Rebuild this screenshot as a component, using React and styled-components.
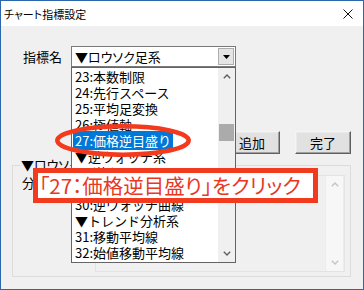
import React from 'react'
import styled, { createGlobalStyle } from 'styled-components'

const GlobalStyle = createGlobalStyle`
  html, body {
    margin: 0;
    padding: 0;
    background: #fff;
  }
  body {
    font-family: "Noto Sans CJK JP", "Noto Sans", sans-serif;
    font-size: 13px;
    color: #000;
  }
`

const Window = styled.div`
  position: relative;
  width: 364px;
  height: 290px;
  box-sizing: border-box;
  border: 1px solid #2c66ad;
  display: flex;
  flex-direction: column;
  overflow: hidden;
`

const TitleBar = styled.div`
  flex: none;
  height: 25px;
  background: #fff;
  display: flex;
  align-items: center;
  justify-content: space-between;
  padding: 0 10px 0 3px;
`

const Title = styled.span`
  font-size: 11px;
  line-height: 14px;
  font-feature-settings: "palt";
`

const Body = styled.div`
  flex: 1;
  background: #f0f0f0;
  padding: 20px 11px 0 11px;
  display: flex;
  flex-direction: column;
`

const ComboRow = styled.div`
  display: flex;
  align-items: center;
  padding-left: 11px;
`

const Label = styled.span`
  width: 48px;
  line-height: 16px;
`

const ComboWrap = styled.div`
  position: relative;
`

const Combo = styled.div`
  width: 165px;
  height: 21px;
  box-sizing: border-box;
  border: 1px solid #7a7a7a;
  background: #fff;
  display: flex;
  align-items: center;
  padding-left: 3px;
  font-feature-settings: "palt";
`

const DropButton = styled.div`
  margin-left: auto;
  margin-right: 1px;
  width: 16px;
  height: 17px;
  box-sizing: border-box;
  border: 1px solid #adadad;
  background: #e5e5e5;
  display: flex;
  align-items: center;
  justify-content: center;
`

const DropList = styled.div`
  position: absolute;
  top: 100%;
  left: 0;
  width: 165px;
  height: 196px;
  box-sizing: border-box;
  border: 1px solid #646464;
  background: #fff;
  display: flex;
  z-index: 2;
`

const Items = styled.div`
  flex: 1;
  overflow: hidden;
  padding-top: 1px;
`

const Item = styled.div`
  height: 16px;
  line-height: 16px;
  padding-left: 1px;
  white-space: nowrap;
`

const ItemText = styled.span`
  padding: 0 2px;
  background: ${p => (p.selected ? '#0078d7' : 'transparent')};
  color: ${p => (p.selected ? '#fff' : '#000')};
`

const ScrollBar = styled.div`
  width: 17px;
  flex: none;
  background: ${p => (p.disabled ? '#f7f7f7' : '#f0f0f0')};
  display: flex;
  flex-direction: column;
  ${p => p.disabled && 'border-left: 1px solid #ececec; border-right: 1px solid #ececec;'}
`

const Arrow = styled.div`
  height: 17px;
  flex: none;
  display: flex;
  align-items: center;
  justify-content: center;
`

const Track = styled.div`
  flex: 1;
`

const Thumb = styled.div`
  margin: 39px 1px 0 1px;
  height: 17px;
  background: #ababab;
`

const ButtonRow = styled.div`
  margin-top: 64px;
  display: flex;
  justify-content: flex-end;
  gap: 15px;
  padding-right: 1px;
`

const Button = styled.div`
  width: 56px;
  height: 23px;
  box-sizing: border-box;
  background: #e1e1e1;
  border: 1px solid;
  border-color: #f4f4f4 #5f5f5f #5f5f5f #f4f4f4;
  box-shadow: inset -1px -1px #a0a0a0, inset 1px 1px #e9e9e9;
  display: flex;
  align-items: center;
  justify-content: center;
  line-height: 16px;
`

const GroupBox = styled.div`
  margin-top: 11px;
  width: 339px;
  height: 112px;
  box-sizing: border-box;
  border: 1px solid #dcdcdc;
  display: flex;
  flex-direction: column;
`

const Legend = styled.span`
  align-self: flex-start;
  margin: -9px 0 0 7px;
  padding: 0 1px;
  background: #f0f0f0;
  line-height: 16px;
  font-feature-settings: "palt";
`

const GroupContent = styled.div`
  margin-top: 2px;
  display: flex;
  align-items: flex-start;
`

const GroupText = styled.span`
  margin-left: 9px;
  line-height: 16px;
`

const ListBox = styled.div`
  margin-left: auto;
  margin-right: 5px;
  width: 250px;
  height: 97px;
  box-sizing: border-box;
  border: 1px solid #e3e3e3;
  display: flex;
  justify-content: flex-end;
`

const Ellipse = styled.svg`
  position: absolute;
  left: 54px;
  top: 123px;
  z-index: 3;
`

const Callout = styled.div`
  position: absolute;
  left: 32px;
  top: 167px;
  width: 285px;
  height: 35px;
  box-sizing: border-box;
  border: 5px solid #f23a1e;
  background: #fff;
  color: #e8381f;
  font-size: 20.5px;
  line-height: 25px;
  padding-left: 1px;
  white-space: nowrap;
  font-feature-settings: "palt";
  z-index: 4;
`

const Chevron = ({ up, color = '#606060' }) => (
  <svg width="8" height="5" viewBox="0 0 8 5">
    <polyline
      points={up ? '0.8,4.2 4,1 7.2,4.2' : '0.8,0.8 4,4 7.2,0.8'}
      fill="none"
      stroke={color}
      strokeWidth="1.4"
    />
  </svg>
)

const items = [
  '23:本数制限',
  '24:先行スペース',
  '25:平均足変換',
  '26:極値軸',
  '27:価格逆目盛り',
  '▼逆ウォッチ系',
  '28:逆ウォッチ',
  '29:逆ウォッチ線',
  '30:逆ウォッチ曲線',
  '▼トレンド分析系',
  '31:移動平均線',
  '32:始値移動平均線',
  '33:終値移動平均線',
]

export default function App() {
  return (
    <>
      <GlobalStyle />
      <Window>
        <TitleBar>
          <Title>チャート指標設定</Title>
          <svg width="10" height="10" viewBox="0 0 10 10">
            <path d="M0.5 0.5 L9.5 9.5 M9.5 0.5 L0.5 9.5" stroke="#111" strokeWidth="1" />
          </svg>
        </TitleBar>
        <Body>
          <ComboRow>
            <Label>指標名</Label>
            <ComboWrap>
              <Combo>
                ▼ロウソク足系
                <DropButton>
                  <svg width="7" height="4" viewBox="0 0 7 4">
                    <polygon points="0,0 7,0 3.5,4" fill="#000" />
                  </svg>
                </DropButton>
              </Combo>
              <DropList>
                <Items>
                  {items.map(text => (
                    <Item key={text}>
                      <ItemText selected={text.startsWith('27')}>{text}</ItemText>
                    </Item>
                  ))}
                </Items>
                <ScrollBar>
                  <Arrow>
                    <Chevron up />
                  </Arrow>
                  <Track>
                    <Thumb />
                  </Track>
                  <Arrow>
                    <Chevron />
                  </Arrow>
                </ScrollBar>
              </DropList>
            </ComboWrap>
          </ComboRow>
          <ButtonRow>
            <Button>追加</Button>
            <Button>完了</Button>
          </ButtonRow>
          <GroupBox>
            <Legend>▼ロウソク足系</Legend>
            <GroupContent>
              <GroupText>分析指標</GroupText>
              <ListBox>
                <ScrollBar disabled>
                  <Arrow>
                    <Chevron up color="#c4c4c4" />
                  </Arrow>
                  <Track />
                  <Arrow>
                    <Chevron color="#c4c4c4" />
                  </Arrow>
                </ScrollBar>
              </ListBox>
            </GroupContent>
          </GroupBox>
        </Body>
        <Ellipse width="136" height="33" viewBox="0 0 136 33">
          <ellipse cx="68" cy="16.5" rx="65.7" ry="14.2" fill="none" stroke="#f4391d" strokeWidth="4.5" />
        </Ellipse>
        <Callout>「27：価格逆目盛り」をクリック</Callout>
      </Window>
    </>
  )
}
